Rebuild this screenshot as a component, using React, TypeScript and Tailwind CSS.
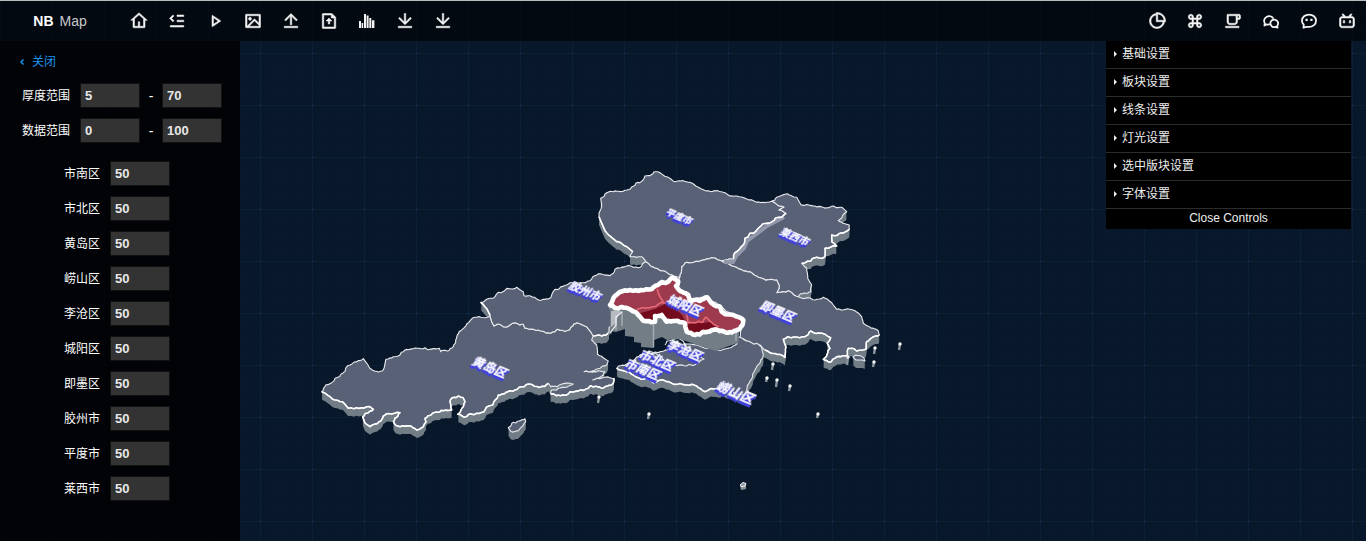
import { useState, type ComponentType } from "react";
import {
  RiHome4Line,
  RiMenuFoldLine,
  RiPlayLine,
  RiImageLine,
  RiUploadLine,
  RiFileUploadLine,
  RiDownloadLine,
  RiPieChart2Line,
  RiCommandLine,
  RiCupLine,
  RiBilibiliLine,
} from "react-icons/ri";

type IconType = ComponentType<{ className?: string }>;
type Point = [number, number];

function BarsIcon() {
  return (
    <svg viewBox="0 0 18 18" fill="currentColor" className="size-[18px]">
      <path d="M1 9h2v7H1zM3.600 11h1.600v5H3.600zM6 2h2v14H6zM8.600 3.500h2V16h-2zM11.300 6h2v10h-2zM14 8.300h2.400V16H14z" />
    </svg>
  );
}

function ChatsIcon() {
  return (
    <svg viewBox="0 0 24 24" fill="none" stroke="currentColor" strokeWidth="2.4" strokeLinejoin="round" className="size-[18px]">
      <path d="M10.500 16.300C9 16.800 7.500 16.800 6.300 16.400L3.300 18l.4-3.200A6.600 6.200 0 1 1 15.300 8.800" />
      <path d="M20.300 18.300l.4 2.600-2.600-1.100a5.200 5 0 1 1 2.200-1.500z" />
    </svg>
  );
}

function BubbleIcon() {
  return (
    <svg viewBox="0 0 24 24" fill="none" stroke="currentColor" strokeWidth="2.4" className="size-[18px]">
      <path d="M4.600 21l.4-4A8.600 8 0 0 1 2.600 11.600C2.600 6.800 6.800 3.400 12 3.400s9.400 3.400 9.400 8.200-4.200 8.200-9.400 8.200H8.500z" strokeLinejoin="round" />
      <path d="M7.300 10.500h3M13.700 10.500h3" strokeWidth="3" />
    </svg>
  );
}

const leftTools: [string, IconType][] = [
  ["首页", RiHome4Line],
  ["菜单", RiMenuFoldLine],
  ["播放", RiPlayLine],
  ["图片", RiImageLine],
  ["上传", RiUploadLine],
  ["上传文件", RiFileUploadLine],
  ["柱状图", BarsIcon],
  ["下载", RiDownloadLine],
  ["导出", RiDownloadLine],
];

const rightTools: [string, IconType][] = [
  ["图表", RiPieChart2Line],
  ["快捷键", RiCommandLine],
  ["咖啡", RiCupLine],
  ["微信", ChatsIcon],
  ["留言", BubbleIcon],
  ["哔哩哔哩", RiBilibiliLine],
];

function Tools({ items }: { items: [string, IconType][] }) {
  return (
    <div className="flex text-[#f4f4f4]">
      {items.map(([label, Icon]) => (
        <button key={label} aria-label={label} className="flex h-10 w-[38px] items-center justify-center">
          <Icon className="size-[18px] [stroke-width:0.7px] [stroke:currentColor]" />
        </button>
      ))}
    </div>
  );
}

function parse(points: string): Point[] {
  return points.split(" ").map((p) => p.split(",").map(Number) as Point);
}

/* Splits an edge by midpoint displacement. The noise depends only on the two
   end points, so neighbouring districts share the same border. */
function roughen(a: Point, b: Point, depth: number): Point[] {
  const length = Math.hypot(b[0] - a[0], b[1] - a[1]);
  if (depth === 0 || length < 3) return [a];
  const seed = Math.sin((a[0] + b[0]) * 12.9898 + (a[1] + b[1]) * 78.233) * 43758.5453;
  const shift = (seed - Math.floor(seed) - 0.5) * Math.min(3, length * 0.36);
  const mid: Point = [(a[0] + b[0]) / 2 + shift * 0.5, (a[1] + b[1]) / 2 + shift];
  return [...roughen(a, mid, depth - 1), ...roughen(mid, b, depth - 1)];
}

function outline(points: string): string {
  const list = parse(points);
  const all = list.flatMap((p, i) => roughen(p, list[(i + 1) % list.length], 3));
  return "M" + all.map(([x, y]) => `${x.toFixed(1)} ${y.toFixed(1)}`).join("L") + "Z";
}

function coast(points: string): string {
  const list = parse(points);
  const all = list.flatMap((p, i) => (i < list.length - 1 ? roughen(p, list[i + 1], 3) : [p]));
  return "M" + all.map(([x, y]) => `${x.toFixed(1)} ${y.toFixed(1)}`).join("L");
}

const districts = [
  // 黄岛区
  "321.7,391.7 325.7,385 335,378.3 343.3,372.7 350,365 363.3,358.7 368,365 370,368.5 378.3,372 382.7,370.7 386,359.3 393.3,356.7 398.3,356 405,350 416.7,348.3 425,347.7 428.3,349.7 439.3,348.3 440.7,351.7 447.3,351 453.3,346.7 455.7,340 458.3,334 466.7,324 475,317.3 490,315 491.7,321.7 494,326 497.7,324 503.3,326.7 510,325 515,322.7 523.3,324.3 525,328.3 540,330.7 550.7,333.3 555,331.7 557.3,329.3 566.7,330.7 576.7,322.7 586.7,326.7 593.3,336 591.7,340 596.7,345 597.3,354 608.3,361 606.7,365 600,368.3 584,371.7 596.7,371.7 605,371.7 603.3,375 592.7,380 602,378 614,378.3 613.3,383.3 601.7,388.3 590,386 570,391.7 556.7,395.7 550.7,394 551.5,390 560,388 573.3,384 562,384 550.7,386.7 548.3,383.3 540,387.3 528.3,384 510,390.7 498.3,395 492.7,405 476.7,413.3 464.3,417.3 457.7,414.3 461,410 465,401.7 463,397.5 458.3,396 453,397.5 450,401.7 451.7,410 438.3,412.3 425,418.3 426,422 423.3,426.7 416.7,430 411,426 400,426.7 396,425.5 393.3,421.7 395,418 400,412.7 391,414 383.3,416 382,419 375,424 370,426.7 365,423 362.7,416.7 368,413 373.3,409.3 369,406.5 348.3,408.3 342.3,401.7 330,396.7",
  // 胶州市
  "480.7,302.3 486.7,299.3 495,296.7 498.3,292.3 516.7,287.3 523.3,291.7 524,295.7 541.7,300 548.3,299 555,289.3 570,282.7 590,280.7 596.7,275 613.3,273.3 615,269.3 626.7,266 640,267.3 646,261.7 651.7,266.7 663.3,270.7 676.7,276.7 668.3,281 653.3,288 630,290 615,294 610,308.3 615,318 608,333 602,336 593.3,336 586.7,326.7 576.7,322.7 566.7,330.7 557.3,329.3 555,331.7 550.7,333.3 540,330.7 525,328.3 523.3,324.3 515,322.7 510,325 503.3,326.7 497.7,324 494,326 491.7,321.7 490,315 487,309",
  // 平度市
  "600.7,198.3 605,194 613.3,191.7 626.7,190 640,182.7 645,176 657.3,171.7 666.7,176.7 675,181.7 688.3,182.3 708.3,190.7 723.3,192.3 730,196 736.7,196 756.7,202.3 771.7,201.3 784,207.3 779,210 786,213.3 781.7,217.3 766.7,223.3 745,238.3 743.3,245 735,252.7 733.3,259.3 721.7,261 713.3,258 700,261 686.7,262.3 681.7,266.7 680,276.7 676.7,276.7 663.3,270.7 651.7,266.7 646,261.7 641.7,256.7 630,256.7 632.7,251.7 616.7,241.7 605,230.7 599,216.7 601.7,206.7",
  // 莱西市
  "771.7,201.3 776.7,197.3 785,194.3 796.7,197.3 801,205 813.3,206 826.7,207.7 841.7,207.3 846.7,211.7 838.3,220.7 849.3,225 849.3,229.3 841,233 831.7,235 831.7,241.7 836.7,246 825,248.3 825,256.7 813.3,258.3 801.7,263.3 806.7,268.3 807.7,278.3 811.7,285 810.7,291.7 798.3,296.7 788.3,290.7 776.7,292.7 779,285 776.7,280 761.7,278.3 750,271.7 731.7,266 721.7,261 733.3,259.3 735,252.7 743.3,245 745,238.3 766.7,223.3 781.7,217.3 786,213.3 779,210 784,207.3",
  // 即墨区
  "680,276.7 681.7,266.7 686.7,262.3 700,261 713.3,258 721.7,261 731.7,266 750,271.7 761.7,278.3 776.7,280 779,285 776.7,292.7 788.3,290.7 798.3,296.7 815,300 823.3,297.3 831.7,302.7 836.7,309.3 855,310.7 861.7,316.7 863.3,323.3 878.3,330.7 879.3,335 866.7,341.7 866,349.3 857,351 848.3,348.3 847.3,355 835,358.3 830,362.3 823.3,359.3 830,348.3 827.3,343.3 830.7,337.7 810.7,331 805,336.7 783.3,339.3 786,347.3 785,357.3 765,350 760,345 753.3,344 740,338.3 743,320 733,315 720,306 707,298 690,300 678,290",
  // 崂山区
  "616.7,368.3 626.7,364 640,355 655,352 668.3,349 686.7,344 716.7,349.3 729,348 736.7,344 738.3,336.7 753.3,344 756.7,343.3 761.7,347.3 763.3,355 756.7,366.7 752,378 746.7,390 752,398 736.7,393 723.3,388 710,389 705,391.7 696.7,386 678.3,384 665,380.7 653.3,382.7 633.3,375 620,370",
  // islands
  "508.3,427.5 512,423 519,421 525,418.8 525.7,421.7 521,427.5 518,431 511,431.5",
  "853,357 858,355.5 864,358 865,361 856,360",
].map(outline);

const shores = [
  "599,216.7 605,230.7 616.7,241.7 632.7,251.7",
  "321.7,391.7 330,396.7 342.3,401.7 348.3,408.3 369,406.5 373.3,409.3 368,413 362.7,416.7 365,423 370,426.7 375,424 382,419 383.3,416 391,414 400,412.7 395,418 393.3,421.7 396,425.5 400,426.7 411,426 416.7,430 423.3,426.7 426,422 425,418.3 438.3,412.3 451.7,410 450,401.7 453,397.5 458.3,396 463,397.5 465,401.7 461,410 457.7,414.3 464.3,417.3 476.7,413.3 492.7,405 498.3,395 510,390.7 528.3,384 540,387.3 548.3,383.3",
  "550.7,394 556.7,395.7 570,391.7 590,386 601.7,388.3 613.3,383.3 614,378.3",
  "765,350 785,357.3 786,347.3 783.3,339.3 805,336.7 810.7,331 830.7,337.7 827.3,343.3 830,348.3 823.3,359.3 830,362.3 835,358.3 847.3,355 848.3,348.3 857,351 866,349.3 866.7,341.7 879.3,335",
  "801.7,263.3 813.3,258.3 825,256.7 825,248.3 836.7,246 831.7,241.7 831.7,235 841,233 849.3,229.3",
  "616.7,368.3 620,370 633.3,375 653.3,382.7 665,380.7 678.3,384 696.7,386 705,391.7 710,389 723.3,388",
  "786,213.3 781.7,217.3 766.7,223.3 745,238.3 743.3,245 735,252.7 733.3,259.3",
  "480.7,302.3 487,309 490,315",
  "593.3,336 602,336 608,333",
].map(coast);

const innerBorders = [
  "665,345 667,341 676,338 683,341 686,346 690,355 698,356 704,359 698,363 686,366 672,365 664,361 659,354",
  "640,355 648,352 655,353 662,358 650,367 637,371",
].map(coast);

const chengyang = outline(
  "610,305 615,296 620,292 630,290 641,290 653.3,287.3 662,282 668.3,281.7 673.3,277.7 678.3,281.7 676,286 680,291 688.3,295 690,301.7 700,301 707.3,297.3 711.7,303.3 720,306.7 721.7,311.7 733.3,315 743.3,320 740,328.3 728.3,332.7 711.7,330 695,335 686.7,331.7 685,323.3 675,321 666.7,321.7 661.7,315 655,316 655,321.7 643.3,320.7 635,311.7 627,308 615,308.3",
);

const islets: [number, number, number][] = [
  [900, 344, 6],
  [875, 348, 6],
  [874, 362, 5],
  [773, 364, 6],
  [767, 378, 4],
  [777, 380, 7],
  [790, 386, 5],
  [818, 414, 4],
  [848, 357, 8],
  [599, 397, 6],
  [649, 414, 5],
];

const labels: [string, number, number, string][] = [
  ["平度市", 665, 214, "text-[9px]"],
  ["莱西市", 779, 234, "text-[10px]"],
  ["胶州市", 568, 288, "text-[11px]"],
  ["即墨区", 759, 308, "text-[12px]"],
  ["城阳区", 666, 302, "text-[12px]"],
  ["黄岛区", 471, 364, "text-[12px]"],
  ["李沧区", 666, 347, "text-[12px]"],
  ["市北区", 638, 357, "text-[12px]"],
  ["市南区", 624, 366, "text-[12px]"],
  ["崂山区", 715, 389, "text-[13px]"],
];

const depths = [8, 7, 6, 5, 4, 3, 2, 1];

function MapScene() {
  return (
    <svg viewBox="0 0 1366 541" preserveAspectRatio="xMidYMid slice" className="absolute inset-0 size-full">
      <g fill="#727d86">
        {depths.map((dy) => (
          <g key={dy} transform={`translate(0 ${dy})`}>
            {districts.map((d, i) => (
              <path key={i} d={d} />
            ))}
          </g>
        ))}
      </g>
      <g fill="#596177" stroke="#e9ebee" strokeWidth="1.1" strokeLinejoin="round">
        {districts.map((d, i) => (
          <path key={i} d={d} />
        ))}
        {innerBorders.map((d) => (
          <path key={d} d={d} fill="none" />
        ))}
      </g>
      <path d="M784 217L767 226L747 241L744 248L736 256L733 262L724 262" fill="none" stroke="#9298aa" strokeWidth="4" />
      <g fill="none" stroke="#ffffff" strokeWidth="1.6" strokeLinejoin="round">
        {shores.map((d) => (
          <path key={d} d={d} />
        ))}
      </g>

      <path
        d="M610 308L610 331L616 332L625 329V336L634 337V342L641 343V347L654 348V340L662 337L667 340L680 339L700 346L716 351L729 346L738 343L740 328L695 334L684 322L636 311Z"
        fill="#727d86"
      />
      <path d="M653.500 324V347M736 331V341M622 311V326M616 312V330" stroke="#a4acb2" strokeWidth="1.500" />
      <path d="M611 311H621L618 316L615 324L611 327Z" fill="#b6bac1" />
      <path d="M622 312L616 317L616 325L610 333" fill="none" stroke="#f1f3f5" strokeWidth="1.2" />
      <path d={chengyang} fill="#9d3a4e" />
      <path d="M637 314L655 309L665 304L676 309L682 315L687 324L702 323L711 322L720 328L711 329L695 334L687 331L685 323L667 321L662 315L655 321L644 320Z" fill="#740b1c" />
      <g fill="none" stroke="#e86876" strokeWidth="1.6" strokeLinejoin="round">
        <path d={coast("637,309 650,308 664,303 676,305 687,314 688,323 703,322 706,317 711,322 719,327")} />
        <path d={coast("657,289 660,297 664,303")} />
      </g>
      <path d={chengyang} fill="none" stroke="#ffffff" strokeWidth="4.6" strokeLinejoin="round" />

      {islets.map(([x, y, h]) => (
        <g key={`${x}-${y}`}>
          <path d={`M${x} ${y}l-1 ${h}`} stroke="#8b949b" strokeWidth="2.4" />
          <circle cx={x} cy={y} r="1.700" fill="#f1f3f5" />
        </g>
      ))}
      <path d="M740 484.500L746 484V489L741 490Z" fill="#8b949b" />
      <path d="M740.500 484.500L743 482.500L746 483.500L745 486L741 486.500Z" fill="#8d93a0" stroke="#f1f3f5" />

      {labels.map(([name, x, y, size]) => (
        <text
          key={name}
          transform={`translate(${x} ${y}) rotate(23)`}
          fill="#ffffff"
          stroke="#ffffff"
          strokeWidth="0.3"
          className={`${size} font-bold italic [filter:drop-shadow(0_1px_0_#4040dc)_drop-shadow(0_1px_0_#4040dc)_drop-shadow(0_1px_0_#4040dc)]`}
        >
          {name}
        </text>
      ))}
    </svg>
  );
}

function NumberBox({ label, initial }: { label: string; initial: string }) {
  const [value, setValue] = useState(initial);
  return (
    <input
      id={label}
      aria-label={label}
      value={value}
      onChange={(e) => setValue(e.target.value)}
      className="h-[25px] w-[60px] border border-[#111111] bg-[#333333] px-1 text-[13px] font-bold text-[#e8e8e8] outline-none"
    />
  );
}

const ranges = [
  ["厚度范围", "5", "70"],
  ["数据范围", "0", "100"],
];
const areas = ["市南区", "市北区", "黄岛区", "崂山区", "李沧区", "城阳区", "即墨区", "胶州市", "平度市", "莱西市"];
const folders = ["基础设置", "板块设置", "线条设置", "灯光设置", "选中版块设置", "字体设置"];

export default function App() {
  return (
    <div className="relative flex min-h-screen flex-col overflow-hidden bg-[#081729] font-['Liberation_Sans','Noto_Sans_CJK_SC',sans-serif] text-xs text-white">
      <div className="absolute inset-0 bg-[radial-gradient(circle_at_0.5px_0.5px,#1d4068_0.7px,transparent_0.7px),linear-gradient(to_right,#0b2036_1px,transparent_1px),linear-gradient(to_bottom,#0b2036_1px,transparent_1px),linear-gradient(to_right,#09192c_1px,transparent_1px),linear-gradient(to_bottom,#09192c_1px,transparent_1px)] bg-[size:52px_52px,52px_52px,52px_52px,13px_13px,13px_13px] bg-[position:0_1px]" />
      <MapScene />

      <header className="relative flex border-t border-[#b9bcbb] bg-black/60">
        <div className="flex w-[120px] items-center justify-center gap-1.5 text-sm">
          <b>NB</b>
          <span className="text-[#c8cacd]">Map</span>
        </div>
        <Tools items={leftTools} />
        <div className="ml-auto">
          <Tools items={rightTools} />
        </div>
      </header>

      <div className="relative flex flex-1 items-start justify-between">
        <aside className="w-60 self-stretch bg-black/85 pt-3">
          <button className="flex h-[18px] items-center gap-[7px] pl-[19px] text-[#1a93ee]">
            <svg viewBox="0 0 6 8" className="h-2 w-1.5" fill="none" stroke="currentColor" strokeWidth="1.500">
              <path d="M4.500 1.500L2 4l2.500 2.500" />
            </svg>
            关闭
          </button>
          <div className="mt-3 flex flex-col gap-2.5">
            {ranges.map(([name, from, to]) => (
              <div key={name} className="flex items-center pl-[22px]">
                <label htmlFor={`${name} 最小`} className="mr-2.5 pt-px">
                  {name}
                </label>
                <NumberBox label={`${name} 最小`} initial={from} />
                <span className="w-[22px] text-center text-sm">-</span>
                <NumberBox label={`${name} 最大`} initial={to} />
              </div>
            ))}
          </div>
          <div className="mt-[18px] flex flex-col gap-2.5">
            {areas.map((name) => (
              <div key={name} className="flex items-center pl-16">
                <label htmlFor={name} className="mr-2.5 pt-px">
                  {name}
                </label>
                <NumberBox label={name} initial="50" />
              </div>
            ))}
          </div>
        </aside>

        <section className="mr-[15px] w-[245px] bg-black text-[#eeeeee]">
          <ul>
            {folders.map((name) => (
              <li key={name} className="border-b border-[#2c2c2c]">
                <button className="flex h-[27px] w-full items-center gap-[5px] pb-0.5 pl-2">
                  <svg viewBox="0 0 3 6" className="h-1.5 w-[3px]" fill="currentColor">
                    <path d="M0 0L3 3L0 6Z" />
                  </svg>
                  {name}
                </button>
              </li>
            ))}
          </ul>
          <button className="flex h-5 w-full items-center justify-center pb-0.5">Close Controls</button>
        </section>
      </div>
    </div>
  );
}
